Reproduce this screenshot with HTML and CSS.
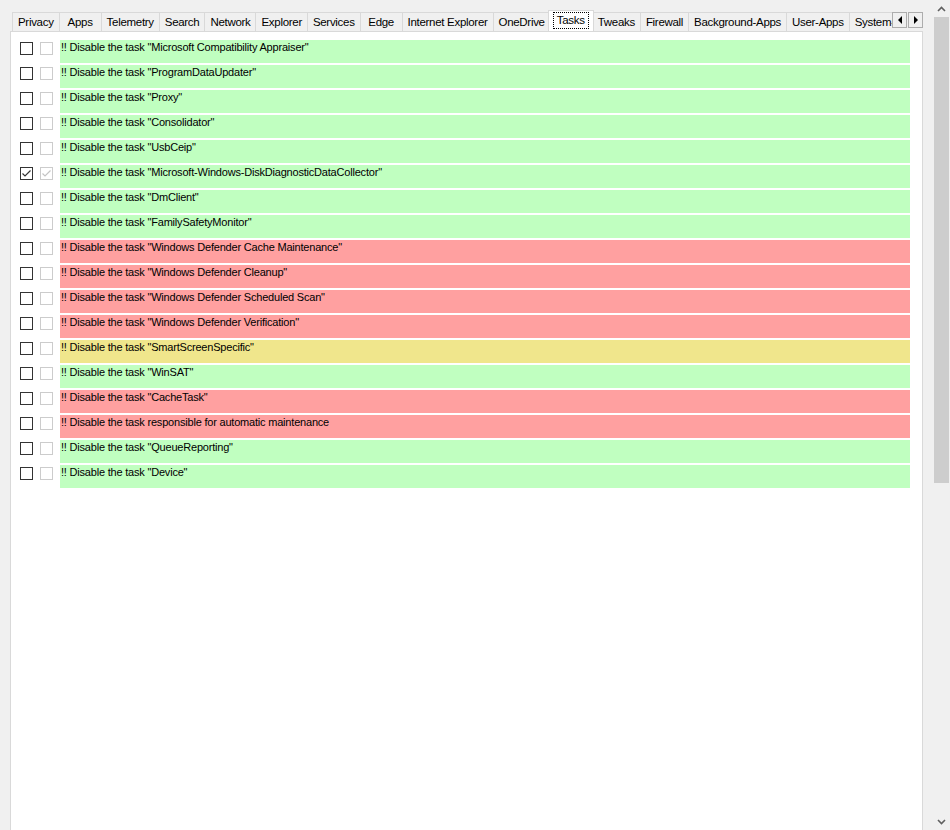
FILE: index.html
```html
<!DOCTYPE html>
<html lang="en">
<head>
    <meta charset="UTF-8">
    <title>Tasks</title>
    <link rel="stylesheet" href="styles.css">
</head>
<body>
    <div class="window">
        <div class="main">
            <div class="tab-strip">
                <div class="tabs">
                    <div class="tab">Privacy</div>
                    <div class="tab">Apps</div>
                    <div class="tab">Telemetry</div>
                    <div class="tab">Search</div>
                    <div class="tab">Network</div>
                    <div class="tab">Explorer</div>
                    <div class="tab">Services</div>
                    <div class="tab">Edge</div>
                    <div class="tab">Internet Explorer</div>
                    <div class="tab">OneDrive</div>
                    <div class="tab active"><span class="focus">Tasks</span></div>
                    <div class="tab">Tweaks</div>
                    <div class="tab">Firewall</div>
                    <div class="tab">Background-Apps</div>
                    <div class="tab">User-Apps</div>
                    <div class="tab">System-Apps</div>
                </div>
                <div class="tab-arrows">
                    <div class="arrow-btn"><span class="tri tri-left"></span></div>
                    <div class="arrow-btn"><span class="tri tri-right"></span></div>
                </div>
            </div>

            <div class="panel">
                <div class="row"><span class="box"></span><span class="box light"></span><span class="label green">!! Disable the task "Microsoft Compatibility Appraiser"</span></div>
                <div class="row"><span class="box"></span><span class="box light"></span><span class="label green">!! Disable the task "ProgramDataUpdater"</span></div>
                <div class="row"><span class="box"></span><span class="box light"></span><span class="label green">!! Disable the task "Proxy"</span></div>
                <div class="row"><span class="box"></span><span class="box light"></span><span class="label green">!! Disable the task "Consolidator"</span></div>
                <div class="row"><span class="box"></span><span class="box light"></span><span class="label green">!! Disable the task "UsbCeip"</span></div>
                <div class="row">
                    <span class="box"><svg viewBox="0 0 11 11" width="11" height="11"><path d="M1.5 5.5 L4 8 L9.5 2.5" fill="none" stroke="#333" stroke-width="1.2"/></svg></span>
                    <span class="box light"><svg viewBox="0 0 11 11" width="11" height="11"><path d="M1.5 5.5 L4 8 L9.5 2.5" fill="none" stroke="#c4c4c4" stroke-width="1.2"/></svg></span>
                    <span class="label green">!! Disable the task "Microsoft-Windows-DiskDiagnosticDataCollector"</span>
                </div>
                <div class="row"><span class="box"></span><span class="box light"></span><span class="label green">!! Disable the task "DmClient"</span></div>
                <div class="row"><span class="box"></span><span class="box light"></span><span class="label green">!! Disable the task "FamilySafetyMonitor"</span></div>
                <div class="row"><span class="box"></span><span class="box light"></span><span class="label red">!! Disable the task "Windows Defender Cache Maintenance"</span></div>
                <div class="row"><span class="box"></span><span class="box light"></span><span class="label red">!! Disable the task "Windows Defender Cleanup"</span></div>
                <div class="row"><span class="box"></span><span class="box light"></span><span class="label red">!! Disable the task "Windows Defender Scheduled Scan"</span></div>
                <div class="row"><span class="box"></span><span class="box light"></span><span class="label red">!! Disable the task "Windows Defender Verification"</span></div>
                <div class="row"><span class="box"></span><span class="box light"></span><span class="label yellow">!! Disable the task "SmartScreenSpecific"</span></div>
                <div class="row"><span class="box"></span><span class="box light"></span><span class="label green">!! Disable the task "WinSAT"</span></div>
                <div class="row"><span class="box"></span><span class="box light"></span><span class="label red">!! Disable the task "CacheTask"</span></div>
                <div class="row"><span class="box"></span><span class="box light"></span><span class="label red">!! Disable the task responsible for automatic maintenance</span></div>
                <div class="row"><span class="box"></span><span class="box light"></span><span class="label green">!! Disable the task "QueueReporting"</span></div>
                <div class="row"><span class="box"></span><span class="box light"></span><span class="label green">!! Disable the task "Device"</span></div>
            </div>
        </div>

        <div class="scrollbar">
            <div class="scroll-btn">
                <svg viewBox="0 0 9 6" width="9" height="6"><path d="M1 5 L4.5 1.5 L8 5" fill="none" stroke="#606060" stroke-width="1.6"/></svg>
            </div>
            <div class="thumb"></div>
            <div class="track"></div>
            <div class="scroll-btn">
                <svg viewBox="0 0 9 6" width="9" height="6"><path d="M1 1 L4.5 4.5 L8 1" fill="none" stroke="#606060" stroke-width="1.6"/></svg>
            </div>
        </div>
    </div>
</body>
</html>
```

FILE: styles.css
```css
* {
    margin: 0;
    padding: 0;
    box-sizing: border-box;
}

body {
    font-family: 'Liberation Sans', Arial, sans-serif;
    font-size: 11px;
    color: #000;
    background: #f0f0f0;
    width: 950px;
    height: 830px;
    overflow: hidden;
}

.window {
    display: flex;
    height: 830px;
}

.main {
    flex: 1;
    display: flex;
    flex-direction: column;
    min-width: 0;
}

/* tab header */
.tab-strip {
    display: flex;
    align-items: flex-end;
    height: 31px;
    padding-left: 12px;
    width: 923px;
}

.tabs {
    flex: 1;
    display: flex;
    align-items: flex-end;
    overflow: hidden;
    white-space: nowrap;
    height: 31px;
}

.tab {
    height: 19px;
    min-width: 42px;
    padding: 2px 5px 0 5px;
    border: 1px solid #d9d9d9;
    border-right: none;
    border-bottom: none;
    background: #f0f0f0;
    flex-shrink: 0;
    text-align: center;
    line-height: 15px;
    font-size: 11.5px;
    letter-spacing: -0.3px;
}

.tab.active {
    height: 21px;
    width: 46px;
    background: #fff;
    border-right: 1px solid #d9d9d9;
    padding: 1px 0 0 0;
    margin: 0 -2px;
    position: relative;
    z-index: 1;
}

.tab.active + .tab {
    border-left: none;
    padding-left: 6px;
}

.focus {
    display: inline-block;
    border: 1px dotted #000;
    padding: 0 3px;
    line-height: 15px;
}

.tab-arrows {
    display: flex;
    align-self: flex-start;
    margin-top: 12px;
    gap: 1px;
}

.arrow-btn {
    width: 15px;
    height: 16px;
    border: 1px solid #adadad;
    background: #f0f0f0;
    display: flex;
    align-items: center;
    justify-content: center;
}

.tri {
    width: 0;
    height: 0;
    border-top: 4px solid transparent;
    border-bottom: 4px solid transparent;
}

.tri-left {
    border-right: 4px solid #000;
}

.tri-right {
    border-left: 4px solid #000;
}

/* tab page */
.panel {
    flex: 1;
    margin-left: 10px;
    width: 913px;
    background: #fff;
    border: 1px solid #d9d9d9;
    border-bottom: none;
    padding: 8px 12px 0 9px;
}

.row {
    display: flex;
    align-items: flex-start;
    height: 25px;
}

.box {
    width: 13px;
    height: 13px;
    border: 1px solid #333;
    margin-top: 2px;
    margin-right: 7px;
    background: #fff;
    flex-shrink: 0;
    display: flex;
    align-items: center;
    justify-content: center;
}

.box.light {
    border-color: #cccccc;
    margin-right: 7px;
}

.label {
    flex: 1;
    height: 23px;
    padding: 1px 0 0 1px;
    font-size: 11px;
    letter-spacing: -0.2px;
    line-height: 13px;
    white-space: nowrap;
}

.green {
    background: #c0ffc0;
}

.red {
    background: #ffa0a0;
}

.yellow {
    background: #f0e68c;
}

/* vertical scrollbar */
.scrollbar {
    width: 17px;
    margin-left: 10px;
    display: flex;
    flex-direction: column;
    background: #f0f0f0;
}

.scroll-btn {
    height: 17px;
    display: flex;
    align-items: center;
    justify-content: center;
}

.thumb {
    height: 466px;
    margin: 0 1px;
    background: #cdcdcd;
}

.track {
    flex: 1;
}
```
